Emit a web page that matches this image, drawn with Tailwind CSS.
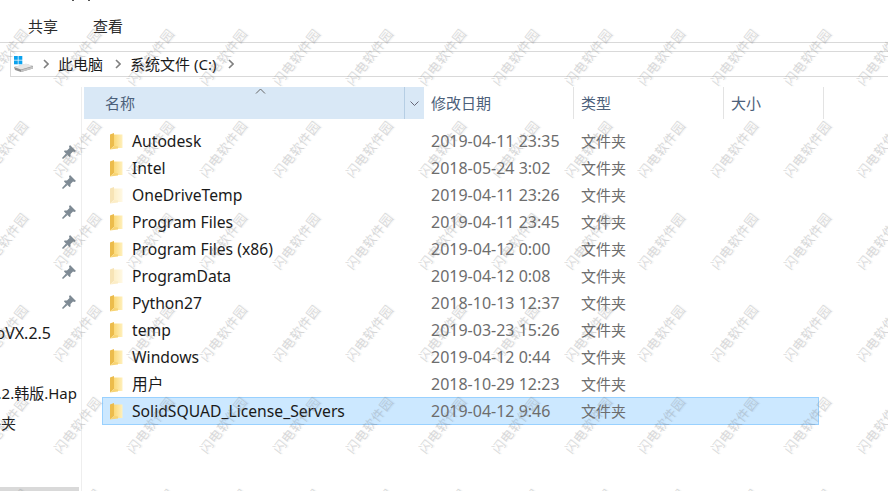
<!DOCTYPE html>
<html lang="en">

<head>
    <meta charset="UTF-8">
    <title>系统文件 (C:)</title>
    <script src="https://cdn.jsdelivr.net/npm/@tailwindcss/browser@4"></script>
</head>

<body class="bg-white font-['Noto_Sans','Noto_Sans_CJK_SC',sans-serif] overflow-hidden">
    <div class="relative w-[888px] h-[491px] overflow-hidden flex flex-col">
        <!-- Clipped window title, only its lowest pixels show -->
        <div class="absolute left-[72px] top-0 w-[2px] h-[1px] bg-[#555]"></div>
        <div class="absolute left-[88px] top-0 w-[2px] h-[1px] bg-[#555]"></div>

        <!-- Ribbon tabs -->
        <div class="h-[43px] shrink-0 border-b border-[#d9d9d9] flex items-start pt-[16px] pl-[28px] gap-[35px] text-[15px] leading-[20px] text-[#2b2b2b]">
            <span>共享</span>
            <span>查看</span>
        </div>

        <!-- Address bar -->
        <div class="h-[26px] shrink-0 mt-[8px] ml-[10px] border border-r-0 border-[#d9d9d9] flex items-center text-[15px] text-[#1a1a1a]">
            <svg class="ml-[2px] w-[20px] h-[18px]" viewBox="0 0 20 18">
                <path d="M1 12 L13 9 L20 11 V13.500 L8 17 L2 15 Z" fill="#8f8f8f" />
                <path d="M8 17 L20 13.500 V11.500 L8 15 Z" fill="#c4c4c4" />
                <path d="M1 12 L8 14.500 L20 11 L13 8.500 Z" fill="#e6e6e6" />
                <rect x="1" y="1" width="3.800" height="3.800" fill="#0aa2ee" />
                <rect x="5.500" y="1" width="3.800" height="3.800" fill="#0aa2ee" />
                <rect x="1" y="5.500" width="3.800" height="3.800" fill="#0aa2ee" />
                <rect x="5.500" y="5.500" width="3.800" height="3.800" fill="#0aa2ee" />
            </svg>
            <svg class="ml-[10px] w-[6px] h-[10px]" viewBox="0 0 6 10" fill="none" stroke="#808080" stroke-width="1.600"><path d="M1 1l4 4-4 4" /></svg>
            <span class="ml-[9px]">此电脑</span>
            <svg class="ml-[12px] w-[6px] h-[10px]" viewBox="0 0 6 10" fill="none" stroke="#808080" stroke-width="1.600"><path d="M1 1l4 4-4 4" /></svg>
            <span class="ml-[9px]">系统文件 (C:)</span>
            <svg class="ml-[12px] w-[6px] h-[10px]" viewBox="0 0 6 10" fill="none" stroke="#808080" stroke-width="1.600"><path d="M1 1l4 4-4 4" /></svg>
        </div>

        <div class="flex flex-1 mt-[10px] min-h-0">
            <!-- Navigation pane -->
            <aside class="relative w-[82px] shrink-0 border-r border-[#eeeeee] overflow-hidden text-[15px] text-[#1a1a1a]">
                <div id="pins" class="mt-[50px] pr-[5px] flex flex-col items-end"></div>
                <div class="mt-[1px] h-[30px] flex items-center justify-end whitespace-nowrap pr-[30px] text-[16px]">GoProVX.2.5</div>
                <div class="mt-[30px] h-[30px] flex items-center justify-end whitespace-nowrap pr-[4px]">v1.2.韩版.Hap</div>
                <div class="h-[30px] flex items-center justify-end whitespace-nowrap pr-[65px]">文件夹</div>
                <div class="absolute left-0 bottom-0 w-[79px] h-[4px] bg-[#d9d9d9]"></div>
            </aside>

            <!-- File list -->
            <main class="flex-1 min-w-0">
                <div class="h-[32px] flex text-[15px] text-[#4c607a]">
                    <div class="relative w-[340px] ml-[2px] bg-[#d9e8f6] flex items-center">
                        <span class="pl-[21px]">名称</span>
                        <svg class="absolute left-[171px] top-[1px] w-[11px] h-[6px]" viewBox="0 0 11 6" fill="none" stroke="#666" stroke-width="1"><path d="M1 5.500l4.500-4.500 4.500 4.500" /></svg>
                        <div class="absolute right-0 top-0 h-full w-[20px] border-l border-[#b6cee4] flex items-center justify-center">
                            <svg class="w-[9px] h-[5px]" viewBox="0 0 9 5" fill="none" stroke="#667" stroke-width="1"><path d="M.5.500l4 4 4-4" /></svg>
                        </div>
                    </div>
                    <div class="w-[150px] pl-[7px] border-r border-[#e3e3e3] flex items-center">修改日期</div>
                    <div class="w-[150px] pl-[7px] border-r border-[#e3e3e3] flex items-center">类型</div>
                    <div class="w-[100px] pl-[7px] border-r border-[#e3e3e3] flex items-center">大小</div>
                </div>
                <div id="rows" class="mt-[8px]"></div>
            </main>
        </div>

        <!-- Watermark -->
        <div id="watermark" class="absolute left-[-32px] top-[11px] grid grid-cols-[repeat(13,73px)] grid-rows-[repeat(6,92px)] pointer-events-none"></div>
    </div>

    <svg class="absolute w-0 h-0">
        <defs>
            <linearGradient id="folderBody" x1="0" y1="0" x2="1" y2="0">
                <stop offset="0" stop-color="#fbd978" />
                <stop offset="1" stop-color="#fff0bd" />
            </linearGradient>
        </defs>
    </svg>

    <script>
        const files = [
            ["Autodesk", "2019-04-11 23:35"],
            ["Intel", "2018-05-24 3:02"],
            ["OneDriveTemp", "2019-04-11 23:26", true],
            ["Program Files", "2019-04-11 23:45"],
            ["Program Files (x86)", "2019-04-12 0:00"],
            ["ProgramData", "2019-04-12 0:08", true],
            ["Python27", "2018-10-13 12:37"],
            ["temp", "2019-03-23 15:26"],
            ["Windows", "2019-04-12 0:44"],
            ["用户", "2018-10-29 12:23"],
            ["SolidSQUAD_License_Servers", "2019-04-12 9:46"],
        ];

        const rows = document.getElementById("rows");
        files.forEach(([name, date, hidden], i) => {
            const selected = i === files.length - 1;
            const row = document.createElement("div");
            row.className = selected
                ? "h-[28px] w-[717px] ml-[20px] border border-[#99d1ff] bg-[#cce8ff] flex items-center"
                : "h-[27px] w-[717px] ml-[20px] pt-[1px] border border-transparent flex items-center";
            row.innerHTML = `
                <svg class="ml-[7px] w-[13px] h-[17px] shrink-0 ${hidden ? "opacity-40" : ""}" viewBox="0 0 13 17">
                    <path d="M4 1.500 H12.500 V15 H4 Z" fill="url(#folderBody)" />
                    <path d="M0 1.500 L4 0 V13 L0 16.500 Z" fill="#ecbc4c" />
                    <path d="M0 16.500 L4 13 L8 13.500 V15.500 Z" fill="#f8d474" />
                </svg>
                <span class="ml-[9px] mt-[2px] w-[299px] whitespace-nowrap text-[15.7px] text-[#1a1a1a]">${name}</span>
                <span class="w-[150px] whitespace-nowrap text-[16px] text-[#6d6d6d]">${date}</span>
                <span class="text-[15px] text-[#6d6d6d]">文件夹</span>`;
            rows.appendChild(row);
        });

        const pins = document.getElementById("pins");
        for (let i = 0; i < 6; i++) {
            pins.innerHTML += `<div class="h-[30px] flex items-center">
                <svg class="w-[14px] h-[14px]" viewBox="0 0 14 14" fill="#7e8a94">
                    <path d="M8 0 L14 6 L12.500 7 L11 6.500 L8.500 9 V11.500 L7.500 12 L2 6.500 L2.500 5.500 H5 L7.500 3 L7 1.500 Z" />
                    <path d="M4 8.500 L5.500 10 L1 14 L0 13 Z" />
                </svg>
            </div>`;
        }

        const watermark = document.getElementById("watermark");
        for (let i = 0; i < 78; i++) {
            watermark.innerHTML += `<div class="flex items-center justify-center"><span class="-rotate-[52deg] whitespace-nowrap text-[13px] tracking-[0.5px] leading-none text-[#8a8a8a]/30 [text-shadow:1px_1px_1px_rgba(0,0,0,0.05)]">闪电软件园</span></div>`;
        }
    </script>
</body>

</html>
